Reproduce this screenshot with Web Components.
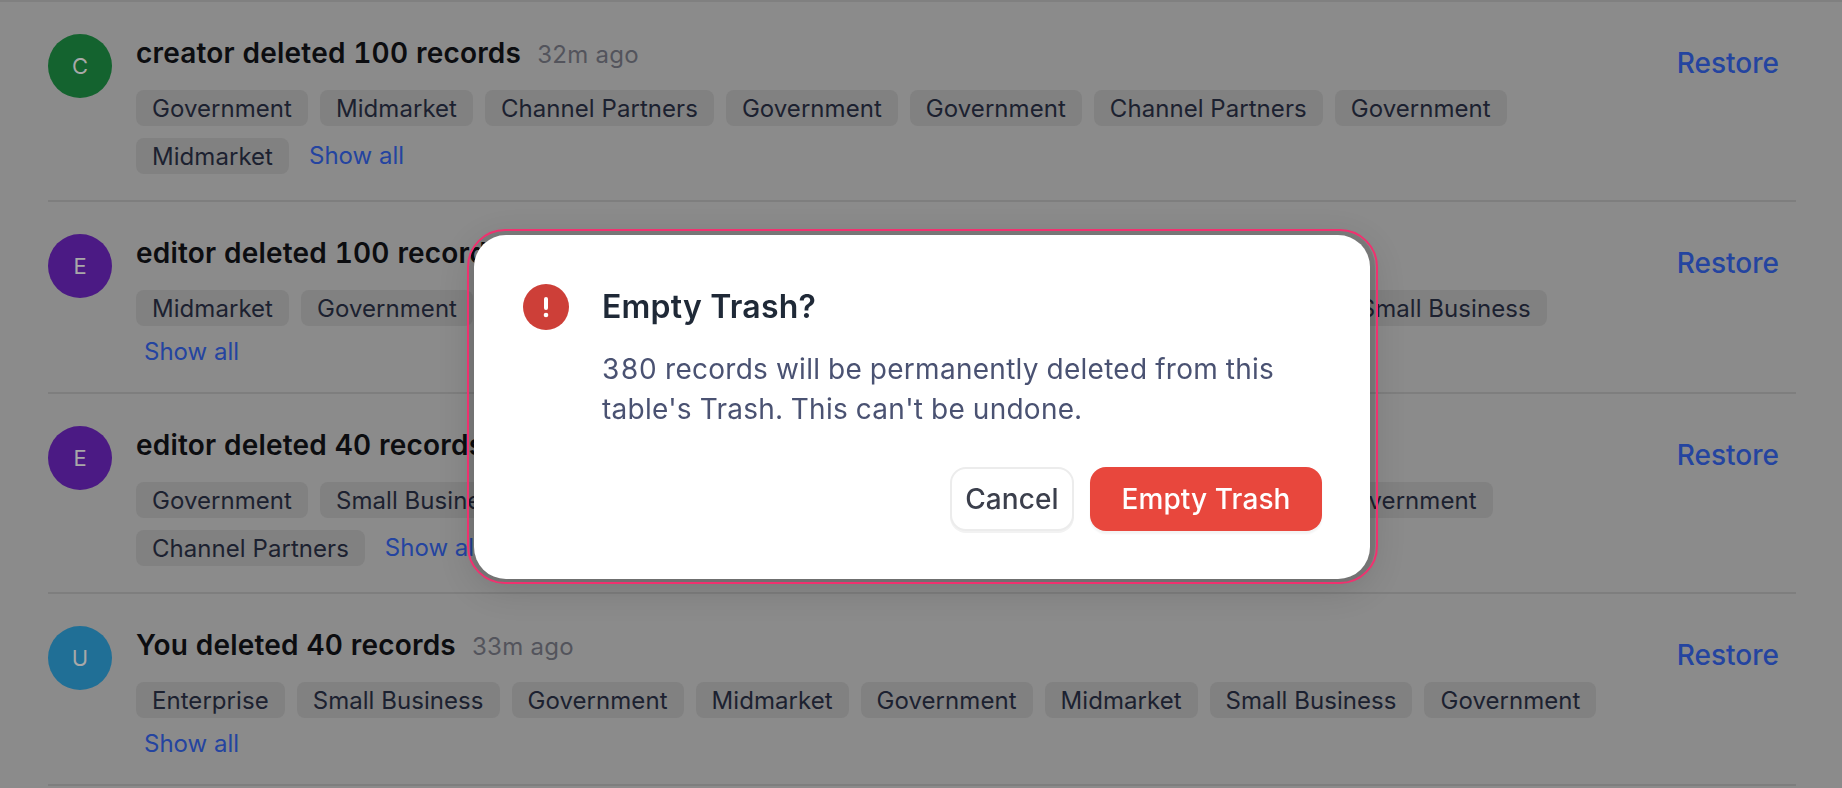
<!DOCTYPE html>
<html lang="en">
<head>
<meta charset="utf-8">
<title>Trash</title>
<style>
  html, body { margin: 0; height: 100%; background: #8b8b8b; overflow: hidden; }
  body { font-family: Inter, "Liberation Sans", sans-serif; }
</style>
</head>
<body>
<trash-list>
  <trash-row who="creator" initial="C" count="100" ago="32m ago" color="#14632f">
    <tag-chip>Government</tag-chip><tag-chip>Midmarket</tag-chip><tag-chip>Channel Partners</tag-chip><tag-chip>Government</tag-chip><tag-chip>Government</tag-chip><tag-chip>Channel Partners</tag-chip><tag-chip>Government</tag-chip><tag-chip>Midmarket</tag-chip>
  </trash-row>
  <trash-row who="editor" initial="E" count="100" ago="32m ago" color="#4b1a84">
    <tag-chip>Midmarket</tag-chip><tag-chip>Government</tag-chip><tag-chip>Government</tag-chip><tag-chip>Midmarket</tag-chip><tag-chip>Midmarket</tag-chip><tag-chip>Enterprise</tag-chip><tag-chip>Government</tag-chip><tag-chip>Small Business</tag-chip>
  </trash-row>
  <trash-row who="editor" initial="E" count="40" ago="32m ago" color="#4b1a84">
    <tag-chip>Government</tag-chip><tag-chip>Small Business</tag-chip><tag-chip>Midmarket</tag-chip><tag-chip>Small Business</tag-chip><tag-chip>Midmarket</tag-chip><tag-chip>Channel Partners</tag-chip><tag-chip>Government</tag-chip><tag-chip>Channel Partners</tag-chip>
  </trash-row>
  <trash-row who="You" initial="U" count="40" ago="33m ago" color="#206f96">
    <tag-chip>Enterprise</tag-chip><tag-chip>Small Business</tag-chip><tag-chip>Government</tag-chip><tag-chip>Midmarket</tag-chip><tag-chip>Government</tag-chip><tag-chip>Midmarket</tag-chip><tag-chip>Small Business</tag-chip><tag-chip>Government</tag-chip>
  </trash-row>
</trash-list>

<confirm-dialog heading="Empty Trash?" confirm="Empty Trash">
  380 records will be permanently deleted from this table's Trash. This can't be undone.
</confirm-dialog>

<script>
class TrashList extends HTMLElement {
  constructor() {
    super();
    this.attachShadow({ mode: 'open' });
    this.shadowRoot.innerHTML = `
      <style>
        :host { display: block; padding: 0 46px 0 48px; border-top: 2px solid #808080; }
      </style>
      <slot></slot>
    `;
  }
}

class TagChip extends HTMLElement {
  constructor() {
    super();
    this.attachShadow({ mode: 'open' });
    this.shadowRoot.innerHTML = `
      <style>
        :host {
          display: inline-flex;
          align-items: center;
          height: 36px;
          padding: 0 16px;
          border-radius: 8px;
          background: #818181;
          color: #1c2130;
          font-size: 24px;
          letter-spacing: .05px;
          white-space: nowrap;
        }
      </style>
      <slot></slot>
    `;
  }
}

class TrashRow extends HTMLElement {
  constructor() {
    super();
    this.attachShadow({ mode: 'open' });
  }

  connectedCallback() {
    const who = this.getAttribute('who');
    const count = this.getAttribute('count');
    this.shadowRoot.innerHTML = `
      <style>
        :host {
          display: flex;
          gap: 24px;
          padding: 32px 0 26px;
          border-bottom: 2px solid #7e7e7e;
        }
        .avatar {
          flex: none;
          width: 64px;
          height: 64px;
          border-radius: 50%;
          background: ${this.getAttribute('color')};
          color: #a8a8a8;
          font-size: 22px;
          display: flex;
          align-items: center;
          justify-content: center;
        }
        .body { flex: 1; min-width: 0; }
        .title { display: flex; align-items: baseline; gap: 16px; height: 36px; padding-top: 1px; margin-bottom: 19px; }
        .what { font-size: 28px; line-height: 36px; font-weight: 600; color: #0c0d10; letter-spacing: .2px; font-variant-numeric: tabular-nums; }
        .ago { font-size: 24px; color: #53545c; letter-spacing: .3px; }
        .tags { display: flex; flex-wrap: wrap; align-items: center; gap: 12px; }
        .more { padding: 0 8px; font-size: 24px; line-height: 28px; color: #2444a0; }
        .restore { flex: none; margin: 11px 17px 0 32px; font-size: 28px; line-height: 36px; font-weight: 500; color: #2444a0; }
      </style>
      <div class="avatar">${this.getAttribute('initial')}</div>
      <div class="body">
        <div class="title">
          <span class="what">${who} deleted ${count} records</span>
          <span class="ago">${this.getAttribute('ago')}</span>
        </div>
        <div class="tags"><slot></slot><span class="more">Show all</span></div>
      </div>
      <div class="restore">Restore</div>
    `;
  }
}

class ConfirmDialog extends HTMLElement {
  constructor() {
    super();
    this.attachShadow({ mode: 'open' });
  }

  connectedCallback() {
    this.shadowRoot.innerHTML = `
      <style>
        :host {
          position: fixed;
          inset: 0;
          display: flex;
          justify-content: center;
          align-items: flex-start;
          padding: 235px 0 0 2px;
          box-sizing: border-box;
        }
        .box {
          position: relative;
          box-sizing: border-box;
          width: 896px;
          height: 344px;
          padding: 49px 48px 48px 49px;
          border-radius: 32px;
          background: #fff;
          box-shadow: 0 0 0 5px rgba(0,0,0,.1), 0 8px 36px rgba(0,0,0,.16);
          display: flex;
          gap: 33px;
        }
        .box::after {
          content: '';
          position: absolute;
          inset: -6px -8px -5px -7px;
          border: 2px solid #f0316f;
          border-radius: 38px;
          pointer-events: none;
        }
        svg { flex: none; width: 46px; height: 46px; }
        .main { flex: 1; min-width: 0; }
        h2 { margin: 0 0 19px; font-size: 32px; line-height: 46px; font-weight: 600; color: #1f2937; letter-spacing: .2px; }
        p { margin: 0; width: 700px; font-size: 28px; line-height: 40px; color: #4a5272; letter-spacing: .27px; font-variant-numeric: tabular-nums; }
        .actions { display: flex; justify-content: flex-end; gap: 16px; margin-top: 38px; }
        .btn { box-sizing: border-box; height: 64px; border-radius: 16px; display: flex; align-items: center; justify-content: center; font-size: 28px; font-weight: 500; letter-spacing: .1px; }
        .cancel { width: 124px; background: #fff; color: #3b3f4c; border: 2px solid #ececec; box-shadow: 0 2px 0 #f2f2f2; }
        .ok { width: 232px; background: #e8473d; color: #fff; box-shadow: 0 3px 2px #f4f4f4; }
      </style>
      <div class="box" role="dialog">
        <svg viewBox="0 0 46 46" aria-hidden="true">
          <circle cx="23" cy="23" r="23" fill="#cd3f38"/>
          <rect x="21" y="13" width="4" height="13" rx="2" fill="#fff"/>
          <circle cx="23" cy="31" r="2.3" fill="#fff"/>
        </svg>
        <div class="main">
          <h2>${this.getAttribute('heading')}</h2>
          <p><slot></slot></p>
          <div class="actions">
            <div class="btn cancel">Cancel</div>
            <div class="btn ok">${this.getAttribute('confirm')}</div>
          </div>
        </div>
      </div>
    `;
  }
}

customElements.define('trash-list', TrashList);
customElements.define('tag-chip', TagChip);
customElements.define('trash-row', TrashRow);
customElements.define('confirm-dialog', ConfirmDialog);
</script>
</body>
</html>
